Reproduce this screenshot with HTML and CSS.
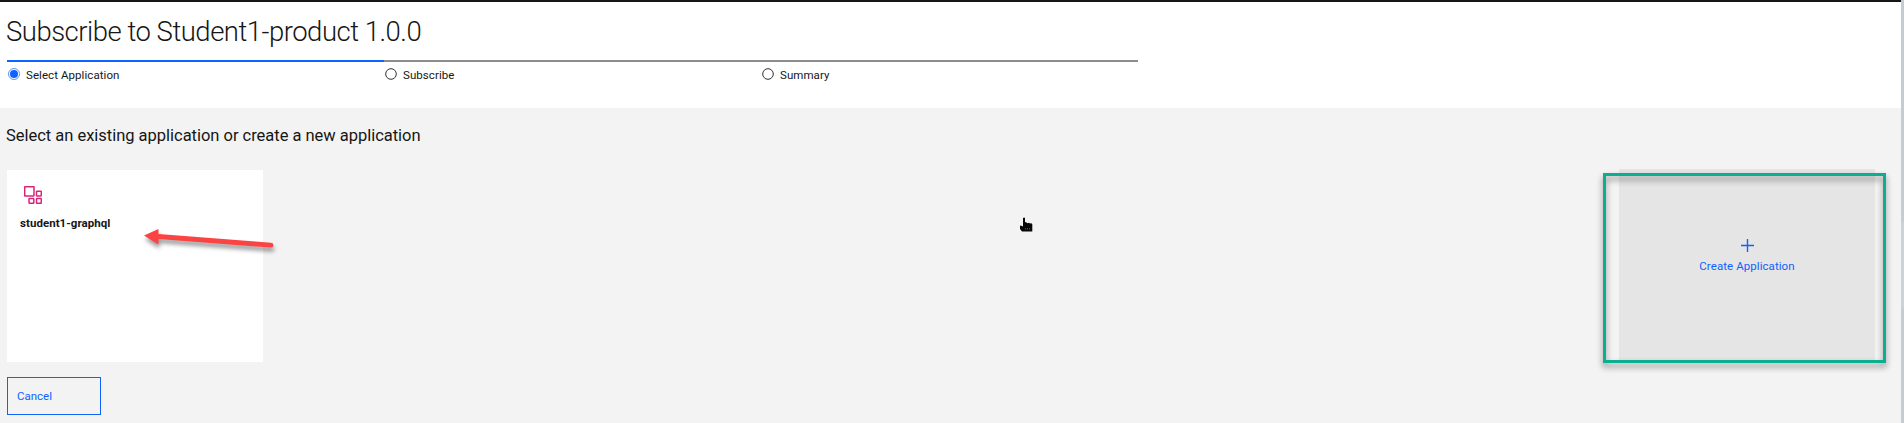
FILE: index.html
```html
<!DOCTYPE html>
<html lang="en">
<head>
<meta charset="utf-8">
<title>Subscribe</title>
<link rel="stylesheet" href="styles.css">
</head>
<body>
<div class="page">
  <main class="content">
    <header class="header">
      <h1 class="title">Subscribe to Student1-product 1.0.0</h1>
      <ol class="steps">
        <li class="step current"><svg class="dot" viewBox="0 0 12 12"><circle cx="6" cy="6" r="5.5" fill="none" stroke="#5c92ff"/><circle cx="6" cy="6" r="4" fill="#0f62fe"/></svg><span>Select Application</span></li>
        <li class="step"><svg class="dot" viewBox="0 0 12 12"><circle cx="6" cy="6" r="5.3" fill="none" stroke="#333"/></svg><span>Subscribe</span></li>
        <li class="step"><svg class="dot" viewBox="0 0 12 12"><circle cx="6" cy="6" r="5.3" fill="none" stroke="#333"/></svg><span>Summary</span></li>
      </ol>
    </header>
    <section class="body">
      <h2 class="subtitle">Select an existing application or create a new application</h2>
      <div class="cards">
        <article class="card">
          <svg class="app-icon" viewBox="0 0 18 18" fill="none" stroke="#da2477" stroke-width="1.5"><rect x=".7" y=".7" width="9.3" height="9.3" rx=".4"/><rect x="12.500" y="5.200" width="4.800" height="4.800" rx=".6"/><rect x="5" y="12.500" width="4.800" height="4.800" rx=".6"/><rect x="12.500" y="12.500" width="4.800" height="4.800" rx=".6"/></svg>
          <span class="app-name">student1-graphql</span>
        </article>
        <div class="card create">
          <svg class="plus" viewBox="0 0 13 13"><path d="M6.5 0v13M0 6.5h13" stroke="#0f62fe" stroke-width="1.4"/></svg>
          <span class="create-label">Create Application</span>
          <div class="highlight"></div>
        </div>
      </div>
      <button class="cancel"><span>Cancel</span></button>
    </section>
  </main>
  <div class="scrollbar"><div class="thumb"></div></div>
</div>
<svg class="arrow" width="150" height="40" viewBox="0 0 150 40"><path d="M14 13.500L28.500 7V12L141 20.800A2.400 2.400 0 0 1 141 25.600L28.500 17V22.500Z" fill="#fb4343"/></svg>
<svg class="cursor" width="16" height="16" viewBox="0 0 16 16"><path d="M4 1q1.300-.8 2 0v4l1.500.5 1 .8 1.500-.5 1 .8 1.500-.3.800 1V14.500H3L1 12V8.500l2 .5 1 .5Z" fill="#080808"/><path d="M6.500 11v1.500M8.500 11v1.500M10.500 11v1.500" stroke="#777" stroke-width=".6"/></svg>
</body>
</html>
```
FILE: styles.css
```css
* { box-sizing: border-box; }
body { margin: 0; height: 423px; overflow: hidden; position: relative; background: #f3f3f3; color: #161616; font-family: "Roboto", sans-serif; font-size: 11.5px; line-height: 16px; }
.page { display: flex; height: 423px; }
.content { flex: 1; display: flex; flex-direction: column; }
.scrollbar { width: 3px; padding-top: 222px; background: #c4ccd6; }
.thumb { height: 87px; border-radius: 2px 0 0 2px; background: #cbd2db; }
.header { height: 108px; padding: 12px 7px 0; border-top: 2px solid #161616; background: #fff; }
.title { margin: 0 0 0 -1px; height: 46px; font-size: 27.5px; line-height: 36px; font-weight: 300; white-space: nowrap; letter-spacing: -.5px; }
.steps { display: grid; grid-template-columns: repeat(3, 377px); margin: 0; padding: 0; list-style: none; }
.step { display: flex; align-items: flex-start; gap: 6px; height: 30px; padding: 5px 0 0 1px; border-top: 2px solid #8d8d8d; white-space: nowrap; letter-spacing: .07px; }
.current { border-color: #0f62fe; }
.dot { width: 12px; height: 12px; margin-top: 1px; }
.body { flex: 1; padding: 17px 26px 0 7px; }
.subtitle { margin: 0 0 0 -1px; height: 45px; font-size: 16.5px; line-height: 22px; font-weight: 400; white-space: nowrap; letter-spacing: -.02px; }
.cards { display: flex; justify-content: space-between; }
.card { width: 256px; height: 192px; padding: 16px 13px; background: #fff; }
.app-icon { display: block; width: 18px; height: 18px; margin: 0 0 11px 4px; }
.app-name { font-weight: 700; white-space: nowrap; letter-spacing: .05px; }
.create { position: relative; display: flex; flex-direction: column; align-items: center; height: 193px; margin-top: -1px; padding-top: 70px; background: #e5e5e5; color: #0f62fe; }
.plus { width: 13px; height: 13px; margin-bottom: 6px; }
.create-label { white-space: nowrap; letter-spacing: .07px; }
.highlight { position: absolute; left: -16px; top: 4px; width: 283px; height: 190px; border: 3px solid #0aae91; filter: drop-shadow(0 4px 3px rgba(0,0,0,.45)); }
.cancel { display: flex; align-items: center; width: 94px; height: 38px; margin-top: 15px; padding: 0 9px; border: 1px solid #0f62fe; background: transparent; color: #0f62fe; font: inherit; }
.arrow { position: absolute; left: 130px; top: 222px; filter: drop-shadow(1px 4px 2px rgba(0,0,0,.4)); }
.cursor { position: absolute; left: 1019px; top: 217px; }
```
